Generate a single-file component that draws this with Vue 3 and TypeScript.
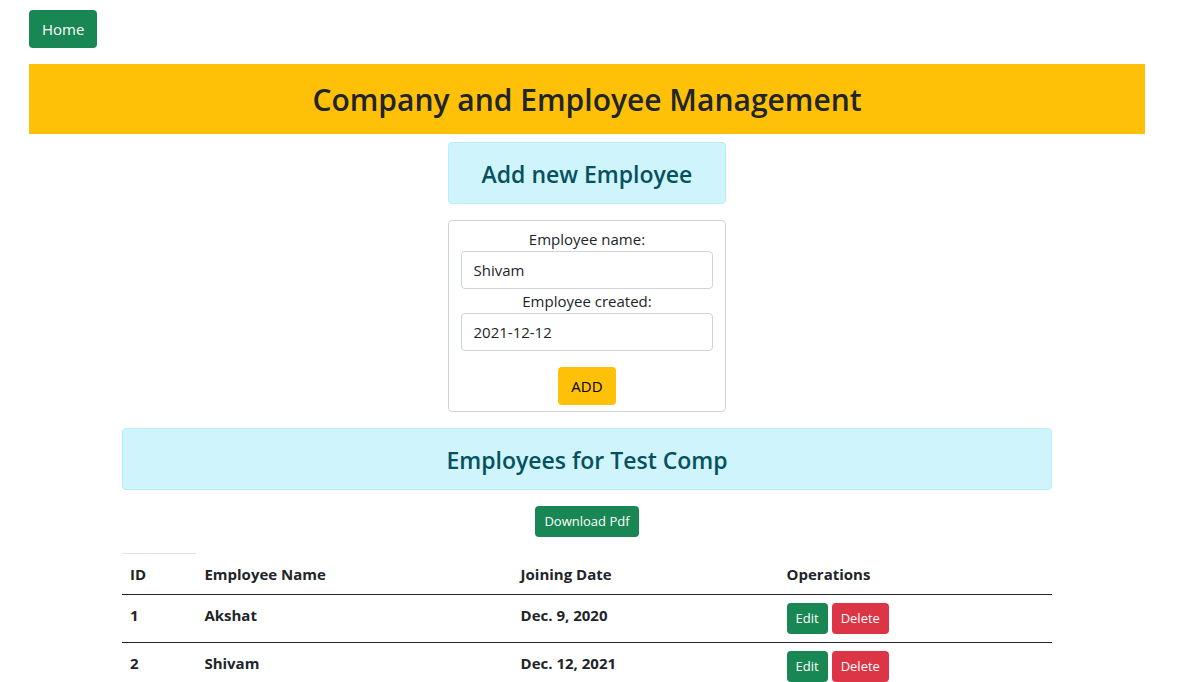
<script setup lang="ts">
import { ref } from 'vue'

interface Employee {
  id: number
  name: string
  joined: string
}

const employeeName = ref('Shivam')
const employeeCreated = ref('2021-12-12')
const employees = ref<Employee[]>([
  { id: 1, name: 'Akshat', joined: 'Dec. 9, 2020' },
  { id: 2, name: 'Shivam', joined: 'Dec. 12, 2021' },
])

function removeEmployee(id: number) {
  employees.value = employees.value.filter((e) => e.id !== id)
}
</script>

<template>
  <div class="page">
    <a href="#" class="btn success">Home</a>
    <h1 class="banner">Company and Employee Management</h1>

    <main class="content">
      <section class="add">
        <h2 class="alert">Add new Employee</h2>
        <form class="card" @submit.prevent>
          <label for="name">Employee name:</label>
          <input id="name" v-model="employeeName" type="text" />
          <label for="created">Employee created:</label>
          <input id="created" v-model="employeeCreated" type="text" />
          <button type="submit" class="btn warning">ADD</button>
        </form>
      </section>

      <h2 class="alert">Employees for Test Comp</h2>
      <a href="#" class="btn success small download">Download Pdf</a>

      <table>
        <colgroup>
          <col class="col-id" />
          <col class="col-name" />
          <col class="col-date" />
          <col />
        </colgroup>
        <thead>
          <tr>
            <th scope="col" class="first">ID</th>
            <th scope="col">Employee Name</th>
            <th scope="col">Joining Date</th>
            <th scope="col">Operations</th>
          </tr>
        </thead>
        <tbody>
          <tr v-for="employee in employees" :key="employee.id">
            <th scope="row">{{ employee.id }}</th>
            <th>{{ employee.name }}</th>
            <th>{{ employee.joined }}</th>
            <td>
              <div class="actions">
                <a href="#" class="btn success small">Edit</a>
                <button type="button" class="btn danger small" @click="removeEmployee(employee.id)">Delete</button>
              </div>
            </td>
          </tr>
        </tbody>
      </table>
    </main>
  </div>
</template>

<style>
html {
  scrollbar-width: none;
}
</style>

<style scoped>
.page {
  box-sizing: border-box;
  padding: 10px 57px 0 29px;
  font-family: "Segoe UI", "Open Sans", "Noto Sans", sans-serif;
  font-size: 15px;
  line-height: 24px;
  color: #212529;
  background: #fff;
}

.page * {
  box-sizing: border-box;
}

.btn {
  display: inline-block;
  padding: 6px 12px;
  border: 1px solid transparent;
  border-radius: 4px;
  font: inherit;
  text-align: center;
  text-decoration: none;
  white-space: nowrap;
  cursor: pointer;
}

.success {
  background: #198754;
  color: #fff;
}

.warning {
  background: #ffc107;
  color: #000;
}

.danger {
  background: #dc3545;
  color: #fff;
}

.small {
  padding: 4px 8px;
  font-size: 13px;
  line-height: 21px;
}

.banner {
  margin: 16px 0 8px;
  padding: 17px 16px 15px;
  background: #ffc107;
  font-size: 30px;
  font-weight: 600;
  line-height: 38px;
  text-align: center;
}

.content {
  width: 83.333%;
  margin: 0 auto;
}

.add {
  width: 30%;
  margin: 0 auto;
}

.alert {
  margin: 0 0 16px;
  padding: 16px 16px 14px;
  border: 1px solid #b6effb;
  border-radius: 4px;
  background: #cff4fc;
  color: #055160;
  font-size: 23px;
  font-weight: 600;
  line-height: 30px;
  text-align: center;
}

.card {
  display: flex;
  flex-direction: column;
  align-items: center;
  margin-bottom: 16px;
  padding: 6px 12px;
  border: 1px solid #ced4da;
  border-radius: 4px;
}

.card input {
  width: 100%;
  height: 38px;
  padding: 6px 12px;
  border: 1px solid #ced4da;
  border-radius: 4px;
  background: #fff;
  color: #212529;
  font: inherit;
}

.card .btn {
  margin-top: 16px;
}

.download {
  display: block;
  width: fit-content;
  margin: 0 auto 16px;
}

table {
  width: 100%;
  table-layout: fixed;
  border-collapse: collapse;
}

.col-id {
  width: 8%;
}

.col-name {
  width: 34%;
}

.col-date {
  width: 28.6%;
}

th,
td {
  padding: 8px;
  border-bottom: 1px solid #212529;
  text-align: left;
  vertical-align: top;
}

th {
  font-weight: 700;
}

.first {
  border-top: 1px solid #dee2e6;
}

.actions {
  display: flex;
  gap: 4px;
}
</style>
